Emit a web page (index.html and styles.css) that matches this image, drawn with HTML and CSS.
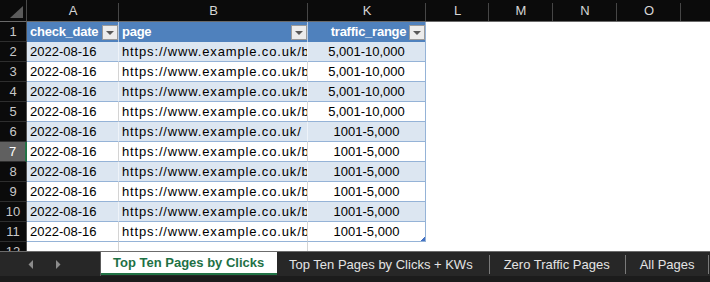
FILE: index.html
```html
<!DOCTYPE html>
<html>
<head>
<meta charset="utf-8">
<link rel="stylesheet" href="styles.css">
</head>
<body>
<div class="app">
  <div class="sheet">
    <div class="corner"><svg width="27" height="22" viewBox="0 0 27 22"><polygon points="10,18 23,18 23,6" fill="#5b5b5b"/></svg></div>
    <div class="ch">A</div>
    <div class="ch">B</div>
    <div class="ch">K</div>
    <div class="ch">L</div>
    <div class="ch">M</div>
    <div class="ch">N</div>
    <div class="ch">O</div>
    <div class="ch last"></div>

    <div class="rh">1</div>
    <div class="th col-a"><span class="tt">check_date</span><i class="flt"></i></div>
    <div class="th col-b"><span class="tt">page</span><i class="flt"></i></div>
    <div class="th col-k"><span class="tt center">traffic_range</span><i class="flt"></i></div>
    <div class="blank"></div>

    <div class="rh">2</div>
    <div class="cell col-a band">2022-08-16</div>
    <div class="cell col-b band url">https://www.example.co.uk/bl</div>
    <div class="cell col-k band num">5,001-10,000</div>
    <div class="blank"></div>

    <div class="rh">3</div>
    <div class="cell col-a">2022-08-16</div>
    <div class="cell col-b url">https://www.example.co.uk/bl</div>
    <div class="cell col-k num">5,001-10,000</div>
    <div class="blank"></div>

    <div class="rh">4</div>
    <div class="cell col-a band">2022-08-16</div>
    <div class="cell col-b band url">https://www.example.co.uk/bl</div>
    <div class="cell col-k band num">5,001-10,000</div>
    <div class="blank"></div>

    <div class="rh">5</div>
    <div class="cell col-a">2022-08-16</div>
    <div class="cell col-b url">https://www.example.co.uk/bl</div>
    <div class="cell col-k num">5,001-10,000</div>
    <div class="blank"></div>

    <div class="rh">6</div>
    <div class="cell col-a band">2022-08-16</div>
    <div class="cell col-b band url">https://www.example.co.uk/</div>
    <div class="cell col-k band num">1001-5,000</div>
    <div class="blank"></div>

    <div class="rh active">7</div>
    <div class="cell col-a">2022-08-16</div>
    <div class="cell col-b url">https://www.example.co.uk/bl</div>
    <div class="cell col-k num">1001-5,000</div>
    <div class="blank"></div>

    <div class="rh">8</div>
    <div class="cell col-a band">2022-08-16</div>
    <div class="cell col-b band url">https://www.example.co.uk/bl</div>
    <div class="cell col-k band num">1001-5,000</div>
    <div class="blank"></div>

    <div class="rh">9</div>
    <div class="cell col-a">2022-08-16</div>
    <div class="cell col-b url">https://www.example.co.uk/bl</div>
    <div class="cell col-k num">1001-5,000</div>
    <div class="blank"></div>

    <div class="rh">10</div>
    <div class="cell col-a band">2022-08-16</div>
    <div class="cell col-b band url">https://www.example.co.uk/bl</div>
    <div class="cell col-k band num">1001-5,000</div>
    <div class="blank"></div>

    <div class="rh">11</div>
    <div class="cell col-a">2022-08-16</div>
    <div class="cell col-b url">https://www.example.co.uk/bl</div>
    <div class="cell col-k num corner-handle">1001-5,000</div>
    <div class="blank"></div>

    <div class="rh">12</div>
    <div class="cell col-a empty"></div>
    <div class="cell col-b empty"></div>
    <div class="cell col-k empty"></div>
    <div class="blank"></div>
  </div>

  <div class="tabbar">
    <div class="tabrow">
      <div class="nav">
        <svg width="6" height="9" viewBox="0 0 6 9"><polygon points="5,0 5,9 0.5,4.5" fill="#8c8c8c"/></svg>
        <svg width="6" height="9" viewBox="0 0 6 9"><polygon points="1,0 1,9 5.5,4.5" fill="#8c8c8c"/></svg>
      </div>
      <div class="tab active">Top Ten Pages by Clicks</div>
      <div class="tab t2">Top Ten Pages by Clicks + KWs</div>
      <div class="tab t3">Zero Traffic Pages</div>
      <div class="tab t4">All Pages</div>
    </div>
    <div class="strip"></div>
  </div>
</div>
</body>
</html>
```

FILE: styles.css
```css
* { box-sizing: border-box; }

html, body {
  margin: 0;
  padding: 0;
  background: #0c0c0c;
  font-family: "Liberation Sans", Arial, sans-serif;
}

.app {
  width: 710px;
  height: 282px;
  display: flex;
  flex-direction: column;
  overflow: hidden;
}

.sheet {
  height: 251px;
  flex: none;
  overflow: hidden;
  display: grid;
  grid-template-columns: 27px 92px 189px 118px 63px 64px 64px 64px 1fr;
  grid-template-rows: 22px repeat(12, 20px);
  background: #ffffff;
}

.corner {
  background: #0b0b0b;
  border-right: 1px solid #4a4a4a;
  border-bottom: 1px solid #6a6a6a;
}
.corner svg { display: block; }

.ch {
  background: #0b0b0b linear-gradient(#464646, #464646) right 3px / 1px calc(100% - 3px) no-repeat;
  border-bottom: 1px solid #6a6a6a;
  color: #d6d6d6;
  font-size: 13px;
  line-height: 21px;
  text-align: center;
}
.ch.last { background: #0b0b0b; }

.rh {
  background: #0b0b0b;
  color: #c8c8c8;
  font-size: 13px;
  line-height: 19px;
  text-align: center;
  border-right: 1px solid #505050;
  border-bottom: 1px solid #2e2e2e;
}
.rh.active {
  background: #606060;
  color: #ffffff;
  border-right: 2px solid #217346;
}

.th {
  background: #4f81bd;
  color: #ffffff;
  font-weight: bold;
  font-size: 13px;
  line-height: 20px;
  letter-spacing: -0.25px;
  display: flex;
  align-items: center;
  padding-left: 3px;
  border-right: 1px solid #b9cde5;
  overflow: hidden;
  white-space: nowrap;
}
.th.col-k { border-right: 1px solid #95b3d7; }
.th .tt { flex: 1; overflow: hidden; }
.th .tt.center { text-align: center; padding-left: 17px; }

.flt {
  flex: none;
  width: 16px;
  height: 15px;
  margin-top: 1px;
  background: #ececec;
  border: 1px solid #9a9a9a;
  display: flex;
  align-items: center;
  justify-content: center;
}
.flt::before {
  content: "";
  border-left: 4px solid transparent;
  border-right: 4px solid transparent;
  border-top: 4px solid #595959;
}

.cell {
  background: #ffffff;
  color: #000000;
  font-size: 13px;
  line-height: 19px;
  padding: 0 3px;
  white-space: nowrap;
  overflow: hidden;
  border-bottom: 1px solid #95b3d7;
  border-right: 1px solid #d4d4d4;
}
.cell.band { background: #dce6f1; border-right-color: #eef3f9; }
.cell.col-k { border-right: 1px solid #95b3d7; }
.cell.num { text-align: center; }
.cell.url { letter-spacing: 0.85px; padding-right: 0; }
.cell.corner-handle {
  background: #ffffff linear-gradient(135deg, transparent 50%, #4472c4 50%) right bottom / 4px 4px no-repeat;
}
.cell.empty { border-bottom: none; }
.cell.col-k.empty { border-right: none; }

.blank { grid-column: 5 / -1; background: #ffffff; }

.tabbar {
  height: 31px;
  flex: none;
  border-top: 1px solid #6c6c6c;
  background: #272727;
  display: flex;
  flex-direction: column;
}

.tabrow {
  height: 24px;
  display: flex;
  align-items: stretch;
}

.nav {
  width: 101px;
  border-right: 1px solid #5a5a5a;
  display: flex;
  align-items: center;
  padding-left: 28px;
  gap: 21px;
}
.nav svg { display: block; }

.tab {
  color: #e4e4e4;
  font-size: 13px;
  display: flex;
  align-items: center;
  white-space: nowrap;
  margin: 3px 0 2px;
  border-right: 1px solid #7a7a7a;
}
.tab.active {
  margin: 0 0 1px;
  width: 176px;
  padding-left: 12px;
  background: #ffffff;
  color: #1e7145;
  font-weight: bold;
  border-right: none;
  border-bottom: 2px solid #217346;
}
.tab.t2 { padding: 0 16px 0 12px; }
.tab.t3 { padding: 0 15px 0 14px; }
.tab.t4 { padding: 0 13px 0 14px; }

.strip {
  flex: 1;
  background: #1c1c1c;
}
```
